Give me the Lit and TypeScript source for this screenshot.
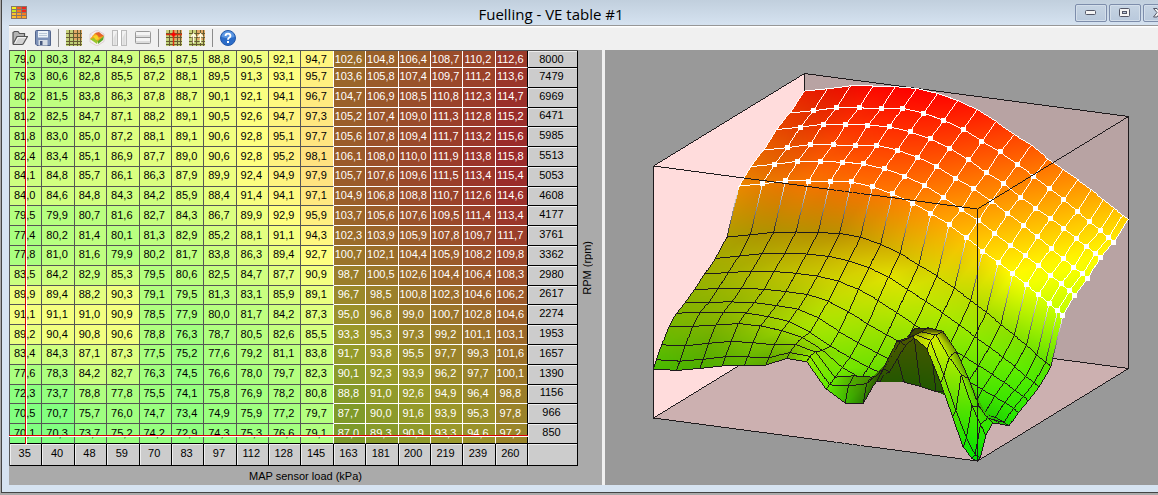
import { LitElement, html, css, svg } from "lit";
import { customElement } from "lit/decorators.js";
import { classMap } from "lit/directives/class-map.js";

const LOADS = [35, 40, 48, 59, 70, 83, 97, 112, 128, 145, 163, 181, 200, 219, 239, 260];
const SPEEDS = [
  8000, 7479, 6969, 6471, 5985, 5513, 5053, 4608, 4177, 3761,
  3362, 2980, 2617, 2274, 1953, 1657, 1390, 1156, 966, 850,
];
const VE: number[][] = [
  [79.0, 80.3, 82.4, 84.9, 86.5, 87.5, 88.8, 90.5, 92.1, 94.7, 102.6, 104.8, 106.4, 108.7, 110.2, 112.6],
  [79.3, 80.6, 82.8, 85.5, 87.2, 88.1, 89.5, 91.3, 93.1, 95.7, 103.6, 105.8, 107.4, 109.7, 111.2, 113.6],
  [80.2, 81.5, 83.8, 86.3, 87.8, 88.7, 90.1, 92.1, 94.1, 96.7, 104.7, 106.9, 108.5, 110.8, 112.3, 114.7],
  [81.2, 82.5, 84.7, 87.1, 88.2, 89.1, 90.5, 92.6, 94.7, 97.3, 105.2, 107.4, 109.0, 111.3, 112.8, 115.2],
  [81.8, 83.0, 85.0, 87.2, 88.1, 89.1, 90.6, 92.8, 95.1, 97.7, 105.6, 107.8, 109.4, 111.7, 113.2, 115.6],
  [82.4, 83.4, 85.1, 86.9, 87.7, 89.0, 90.6, 92.8, 95.2, 98.1, 106.1, 108.0, 110.0, 111.9, 113.8, 115.8],
  [84.1, 84.8, 85.7, 86.1, 86.3, 87.9, 89.9, 92.4, 94.9, 97.9, 105.7, 107.6, 109.6, 111.5, 113.4, 115.4],
  [84.0, 84.6, 84.8, 84.3, 84.2, 85.9, 88.4, 91.4, 94.1, 97.1, 104.9, 106.8, 108.8, 110.7, 112.6, 114.6],
  [79.5, 79.9, 80.7, 81.6, 82.7, 84.3, 86.7, 89.9, 92.9, 95.9, 103.7, 105.6, 107.6, 109.5, 111.4, 113.4],
  [77.4, 80.2, 81.4, 80.1, 81.3, 82.9, 85.2, 88.1, 91.1, 94.3, 102.3, 103.9, 105.9, 107.8, 109.7, 111.7],
  [77.8, 81.0, 81.6, 79.9, 80.2, 81.7, 83.8, 86.3, 89.4, 92.7, 100.7, 102.1, 104.4, 105.9, 108.2, 109.8],
  [83.5, 84.2, 82.9, 85.3, 79.5, 80.6, 82.5, 84.7, 87.7, 90.9, 98.7, 100.5, 102.6, 104.4, 106.4, 108.3],
  [89.9, 89.4, 88.2, 90.3, 79.1, 79.5, 81.3, 83.1, 85.9, 89.1, 96.7, 98.5, 100.8, 102.3, 104.6, 106.2],
  [91.1, 91.1, 91.0, 90.9, 78.5, 77.9, 80.0, 81.7, 84.2, 87.3, 95.0, 96.8, 99.0, 100.7, 102.8, 104.6],
  [89.2, 90.4, 90.8, 90.6, 78.8, 76.3, 78.7, 80.5, 82.6, 85.5, 93.3, 95.3, 97.3, 99.2, 101.1, 103.1],
  [83.4, 84.3, 87.1, 87.3, 77.5, 75.2, 77.6, 79.2, 81.1, 83.8, 91.7, 93.8, 95.5, 97.7, 99.3, 101.6],
  [77.6, 78.3, 84.2, 82.7, 76.3, 74.5, 76.6, 78.0, 79.7, 82.3, 90.1, 92.3, 93.9, 96.2, 97.7, 100.1],
  [72.3, 73.7, 78.8, 77.8, 75.5, 74.1, 75.8, 76.9, 78.2, 80.8, 88.8, 91.0, 92.6, 94.9, 96.4, 98.8],
  [70.5, 70.7, 75.7, 76.0, 74.7, 73.4, 74.9, 75.9, 77.2, 79.7, 87.7, 90.0, 91.6, 93.9, 95.3, 97.8],
  [70.1, 70.3, 73.7, 75.2, 74.2, 72.9, 74.3, 75.3, 76.6, 79.1, 87.0, 89.3, 90.9, 93.3, 94.6, 97.2],
];
const FIRST_SELECTED = 10;
const LOW = 70.1;
const HIGH = 115.8;

type Rgb = [number, number, number];

const level = (v: number) => (v - LOW) / (HIGH - LOW);

/** Green through yellow to red for a level between 0 and 1. */
function ramp(h: number): Rgb {
  return [Math.min(1, 2 * h) * 255, Math.min(1, 2 - 2 * h) * 255, 0];
}

function cellColor(v: number, selected: boolean): string {
  const c = ramp(level(v)).map((x) => Math.round(selected ? 42 + x * 0.44 : 128 + x * 0.498));
  return `rgb(${c.join(",")})`;
}

/* ---------- 3D surface ---------- */

interface Vertex {
  x: number;
  y: number;
  d: number;
  c: Rgb;
}

const SCENE_W = 553;
const SCENE_H = 435;
const AMBIENT = 0.27;
const DIFFUSE = 0.68;
const BACK_SHADE = 0.34;
const SELECTED_GAIN = 1.36;

@customElement("ve-surface")
export class VeSurface extends LitElement {
  static styles = css`
    :host {
      display: block;
      position: relative;
      min-width: 0;
      min-height: 0;
      background: #999;
      overflow: hidden;
    }
    .view {
      position: absolute;
      inset: 0;
      width: 100%;
      height: 100%;
    }
  `;

  private observer?: ResizeObserver;

  firstUpdated() {
    this.observer = new ResizeObserver(() => this.draw());
    this.observer.observe(this);
    this.draw();
  }

  disconnectedCallback() {
    super.disconnectedCallback();
    this.observer?.disconnect();
  }

  private draw() {
    const canvas = this.renderRoot.querySelector("canvas");
    const w = this.clientWidth;
    const h = this.clientHeight;
    if (!canvas || !w || !h) return;
    canvas.width = w;
    canvas.height = h;
    const ctx = canvas.getContext("2d")!;
    const image = ctx.createImageData(w, h);
    const px = image.data;
    const depth = new Float32Array(w * h).fill(-1e9);

    const k = Math.min(w / SCENE_W, h / SCENE_H);
    const ox = (w - SCENE_W * k) / 2;
    const oy = (h - SCENE_H * k) / 2;

    const project = (u: number, v: number, z: number, c: Rgb): Vertex => ({
      x: ox + k * (48 + 324 * u + 151 * v),
      y: oy + k * (368 + 43 * u - 92.5 * v - 252 * z),
      d: 144.7 * u - 311 * v + 75 * z,
      c,
    });

    const plot = (x: number, y: number, d: number, r: number, g: number, b: number) => {
      if (x < 0 || y < 0 || x >= w || y >= h) return;
      const i = y * w + x;
      if (d < depth[i]) return;
      depth[i] = d;
      px[i * 4] = r;
      px[i * 4 + 1] = g;
      px[i * 4 + 2] = b;
      px[i * 4 + 3] = 255;
    };

    const signedArea = (a: Vertex, b: Vertex, c: Vertex) =>
      (b.x - a.x) * (c.y - a.y) - (c.x - a.x) * (b.y - a.y);

    const triangle = (a: Vertex, b: Vertex, c: Vertex) => {
      const area = signedArea(a, b, c);
      if (Math.abs(area) < 1e-6) return;
      const x0 = Math.floor(Math.min(a.x, b.x, c.x));
      const x1 = Math.ceil(Math.max(a.x, b.x, c.x));
      const y0 = Math.floor(Math.min(a.y, b.y, c.y));
      const y1 = Math.ceil(Math.max(a.y, b.y, c.y));
      for (let y = y0; y <= y1; y++) {
        for (let x = x0; x <= x1; x++) {
          const p = x + 0.5;
          const q = y + 0.5;
          const wb = ((p - a.x) * (c.y - a.y) - (c.x - a.x) * (q - a.y)) / area;
          const wc = ((b.x - a.x) * (q - a.y) - (p - a.x) * (b.y - a.y)) / area;
          const wa = 1 - wb - wc;
          if (wa < -1e-4 || wb < -1e-4 || wc < -1e-4) continue;
          plot(
            x, y, wa * a.d + wb * b.d + wc * c.d,
            wa * a.c[0] + wb * b.c[0] + wc * c.c[0],
            wa * a.c[1] + wb * b.c[1] + wc * c.c[1],
            wa * a.c[2] + wb * b.c[2] + wc * c.c[2],
          );
        }
      }
    };

    const line = (a: Vertex, b: Vertex, bias: number) => {
      const n = Math.max(1, Math.ceil(Math.max(Math.abs(b.x - a.x), Math.abs(b.y - a.y))));
      for (let s = 0; s <= n; s++) {
        const t = s / n;
        const m = (p: number, q: number) => p + (q - p) * t;
        plot(
          Math.floor(m(a.x, b.x)), Math.floor(m(a.y, b.y)), m(a.d, b.d) + bias,
          m(a.c[0], b.c[0]), m(a.c[1], b.c[1]), m(a.c[2], b.c[2]),
        );
      }
    };

    const face = (points: number[][], c: Rgb) => {
      const p = points.map(([u, v, z]) => project(u, v, z, c));
      p.forEach((q) => (q.d -= 500));
      triangle(p[0], p[1], p[2]);
      triangle(p[0], p[2], p[3]);
    };
    face([[0, 0, 0], [0, 1, 0], [0, 1, 1], [0, 0, 1]], [255, 220, 220]);
    face([[0, 1, 0], [1, 1, 0], [1, 1, 1], [0, 1, 1]], [184, 163, 163]);
    face([[0, 0, 0], [1, 0, 0], [1, 1, 0], [0, 1, 0]], [204, 176, 176]);

    const ink: Rgb = [30, 26, 28];
    const edge = (a: number[], b: number[], bias: number) =>
      line(project(a[0], a[1], a[2], ink), project(b[0], b[1], b[2], ink), bias);
    edge([0, 0, 0], [0, 1, 0], -400);
    edge([0, 1, 0], [1, 1, 0], -400);
    edge([0, 1, 0], [0, 1, 1], -400);

    const u = SPEEDS.map((s) => (SPEEDS[0] - s) / (SPEEDS[0] - SPEEDS[SPEEDS.length - 1]));
    const v = LOADS.map((l) => (l - LOADS[0]) / (LOADS[LOADS.length - 1] - LOADS[0]));
    const rows = u.length;
    const cols = v.length;
    const clampI = (i: number) => Math.max(0, Math.min(rows - 1, i));
    const clampJ = (j: number) => Math.max(0, Math.min(cols - 1, j));
    const rise = 263 / 357;

    const mesh: Vertex[][] = [];
    const underside: Vertex[][] = [];
    for (let i = 0; i < rows; i++) {
      mesh.push([]);
      underside.push([]);
      for (let j = 0; j < cols; j++) {
        const z = level(VE[i][j]);
        const [i0, i1, j0, j1] = [clampI(i - 1), clampI(i + 1), clampJ(j - 1), clampJ(j + 1)];
        const su = (rise * (level(VE[i1][j]) - level(VE[i0][j]))) / (u[i1] - u[i0]);
        const sv = (rise * (level(VE[i][j1]) - level(VE[i][j0]))) / (v[j1] - v[j0]);
        const lit = (0.65 - 0.65 * su + 0.35 * sv) / Math.hypot(su, sv, 1);
        const gain = j >= FIRST_SELECTED ? SELECTED_GAIN : 1;
        const shade = Math.min(1, gain * (AMBIENT + DIFFUSE * Math.max(0, lit)));
        const base = ramp(z);
        mesh[i].push(project(u[i], v[j], z, base.map((x) => x * shade) as Rgb));
        underside[i].push(project(u[i], v[j], z, base.map((x) => x * BACK_SHADE) as Rgb));
      }
    }
    const facet = (corners: [number, number][]) => {
      const front = corners.map(([i, j]) => mesh[i][j]);
      const facing = signedArea(front[0], front[1], front[2]) < 0;
      const p = facing ? front : corners.map(([i, j]) => underside[i][j]);
      triangle(p[0], p[1], p[2]);
    };
    for (let i = 0; i + 1 < rows; i++) {
      for (let j = 0; j + 1 < cols; j++) {
        facet([[i, j], [i + 1, j], [i + 1, j + 1]]);
        facet([[i, j], [i + 1, j + 1], [i, j + 1]]);
      }
    }
    const white: Rgb = [255, 255, 255];
    const wire = mesh.map((row) =>
      row.map((p, j) => ({ ...p, c: j >= FIRST_SELECTED ? white : ink })),
    );
    for (let i = 0; i < rows; i++) {
      for (let j = 0; j < cols; j++) {
        if (i + 1 < rows) line(wire[i][j], wire[i + 1][j], 3);
        if (j + 1 < cols) line(wire[i][j], wire[i][j + 1], 3);
      }
    }
    for (let i = 1; i < rows; i++) {
      for (let j = FIRST_SELECTED; j + 1 < cols; j++) {
        const p = mesh[i][j];
        for (let dy = -2; dy <= 2; dy++) {
          for (let dx = -2; dx <= 2; dx++) {
            plot(Math.floor(p.x) + dx, Math.floor(p.y) + dy, p.d + 8, 255, 255, 255);
          }
        }
      }
    }

    edge([0, 0, 1], [0, 1, 1], -400);
    edge([0, 1, 1], [1, 1, 1], -400);
    edge([1, 1, 0], [1, 1, 1], -400);
    edge([0, 0, 0], [0, 0, 1], 900);
    edge([0, 0, 0], [1, 0, 0], 900);
    edge([1, 0, 0], [1, 1, 0], 900);
    edge([0, 0, 1], [1, 0, 1], 900);
    edge([1, 0, 1], [1, 1, 1], 900);
    edge([1, 0, 0], [1, 0, 1], 900);
    ctx.putImageData(image, 0, 0);
  }

  render() {
    return html`<canvas class="view" role="img" aria-label="VE table surface"></canvas>`;
  }
}

/* ---------- table ---------- */

@customElement("ve-table")
export class VeTable extends LitElement {
  static styles = css`
    :host {
      display: grid;
      grid-template-columns: minmax(0, 1fr) 24px;
      grid-template-rows: minmax(0, 1fr) 19px;
      min-width: 0;
      min-height: 0;
      background: #aaa;
      font: 11px/14px "Liberation Sans", Arial, sans-serif;
      color: #000;
    }
    .frame {
      grid-area: 1 / 1;
      position: relative;
      min-height: 0;
    }
    table {
      width: 100%;
      height: 100%;
      table-layout: fixed;
      border-collapse: separate;
      border-spacing: 0;
      border-top: 1px solid #555;
      border-left: 1px solid #555;
      box-sizing: border-box;
    }
    .speed {
      width: 50px;
    }
    td,
    th {
      padding: 0 2px 2px 0;
      text-align: center;
      font-weight: normal;
      white-space: nowrap;
      border-right: 1px solid #555;
      border-bottom: 1px solid #555;
      overflow: hidden;
    }
    tbody tr:first-child {
      height: 17px;
    }
    tfoot tr {
      height: 22px;
    }
    .before {
      border-right-color: #fff;
    }
    .selected {
      color: #fff;
      border-color: #fff;
    }
    .last {
      border-right-color: #000;
    }
    tbody tr:last-child td {
      border-bottom-color: #000;
    }
    th {
      padding-bottom: 3px;
      background: #ccc;
      border-color: #000;
      box-shadow: inset 1px 1px #eee;
    }
    tbody tr:first-child > * {
      padding-bottom: 0;
    }
    .hair-x,
    .hair-y {
      position: absolute;
      pointer-events: none;
    }
    .hair-x {
      left: 0;
      right: 50px;
      bottom: 29px;
      height: 1px;
      background: #d00;
      border-bottom: 1px solid #fff;
    }
    .hair-y {
      top: 0;
      bottom: 22px;
      left: 16px;
      width: 1px;
      background: #d00;
      border-right: 1px solid #fff;
    }
    .speed-label {
      grid-area: 1 / 2 / 3;
      align-self: center;
      justify-self: start;
      padding-right: 2px;
      writing-mode: vertical-rl;
      transform: rotate(180deg);
    }
    .load-label {
      grid-area: 2 / 1 / 3 / 3;
      align-self: center;
      text-align: center;
    }
  `;

  render() {
    return html`
      <div class="frame">
        <table aria-label="VE table">
          <colgroup>
            ${LOADS.map(() => html`<col />`)}
            <col class="speed" />
          </colgroup>
          <tbody>
            ${SPEEDS.map(
              (speed, i) => html`<tr>
                ${VE[i].map((value, j) => {
                  const selected = j >= FIRST_SELECTED;
                  return html`<td
                    class=${classMap({
                      selected,
                      before: j === FIRST_SELECTED - 1,
                      last: j === LOADS.length - 1,
                    })}
                    style="background:${cellColor(value, selected)}"
                  >${value.toFixed(1).replace(".", ",")}</td>`;
                })}
                <th scope="row">${speed}</th>
              </tr>`,
            )}
          </tbody>
          <tfoot>
            <tr>
              ${LOADS.map((load) => html`<th scope="col">${load}</th>`)}
              <th></th>
            </tr>
          </tfoot>
        </table>
        <div class="hair-y"></div>
        <div class="hair-x"></div>
      </div>
      <div class="speed-label">RPM (rpm)</div>
      <div class="load-label">MAP sensor load (kPa)</div>
    `;
  }
}

/* ---------- icons ---------- */

const lattice = svg`
  <rect width="16" height="16" fill="#c5cf78"/>
  <rect x="8" width="8" height="10" fill="#dfa765"/>
  <rect y="10" width="9" height="6" fill="#bcd077"/>
  <path d="M0 3.5H16M0 7.5H16M0 11.5H16M0 14.5H16M3.5 0V16M7.5 0V16M11.5 0V16M14.5 0V16" stroke="#665c31" stroke-width="1" fill="none"/>`;

const icons = {
  open: svg`
    <path d="M1 13.500V2.500L2.500 1.500H6L7.500 3.500H12.500V6" fill="#b4b4b4" stroke="#555" stroke-width="1.200"/>
    <path d="M1 14L5 6.500H15.500L11.500 13.500Q11 14.500 10 14.500H1.500Z" fill="#d2d2d2" stroke="#555" stroke-width="1.200"/>
    <path d="M3 13L6 7.700H14" stroke="#fafafa" fill="none"/>`,
  save: svg`
    <path d="M.5 1.500Q.5.500 1.500.500H14.500Q15.500.500 15.500 1.500V15.500H2L.5 14Z" fill="#7e92b8" stroke="#53658c"/>
    <rect x="3" y="1" width="10" height="6.500" fill="#eef3f8"/>
    <path d="M4 3.500H12M4 5.500H12" stroke="#b9c6d6"/>
    <rect x="3.500" y="10" width="9" height="5.500" fill="#d7dde6"/>
    <rect x="5" y="11" width="2.500" height="4" fill="#46577d"/>`,
  grid: lattice,
  surface: svg`
    <path d="M8 0L15 4V11.500L8 16L1 12V4Z" fill="#f6f0f2" stroke="#d9c6cc" stroke-width=".8"/>
    <path d="M8 0V8M1 4L8 8L15 4" stroke="#ddd0d4" fill="none" stroke-width=".8"/>
    <path d="M1 9L6 3L15 6L9 12Z" fill="#f5a21d"/>
    <path d="M6 3L10 2L15 6L10 7Z" fill="#e4632a"/>
    <path d="M1 9L5 8L9 11L8 14Z" fill="#9ac72c"/>
    <path d="M9 11L15 6L14 10L9 14Z" fill="#5ba626"/>
    <path d="M4 6L8 5L10 9L7 10Z" fill="#f7d428"/>`,
  columns: svg`
    <rect x=".5" y=".5" width="14" height="15" fill="#f2f2f2" stroke="#bbb"/>
    <path d="M5.500 1V15M9.500 1V15" stroke="#b5b5b5"/>
    <rect x="6" y="0" width="3" height="16" fill="#fff"/>
    <path d="M1.500 8L4.500 2V15H1.500Z" fill="#dedede"/>
    <path d="M10.500 8L13.500 2V15H10.500Z" fill="#dedede"/>`,
  rows: svg`
    <rect x=".5" y="1.500" width="15" height="12" rx="1" fill="#f4f4f4" stroke="#999"/>
    <rect x="1" y="5" width="14" height="2" fill="#dcdcdc"/>
    <path d="M1 7.500H15" stroke="#999"/>
    <rect x="1" y="11" width="14" height="2" fill="#dcdcdc"/>`,
  cross: svg`${lattice}
    <path d="M0 4.500H16M7.500 0V16" stroke="#d9300f" stroke-width="1.500"/>
    <path d="M5.500 4.500H9.500M7.500 2.500V6.500" stroke="#f00" stroke-width="2"/>`,
  arrows: svg`${lattice}
    <path d="M4.500 13V5M11.500 13V5M2 7L4.500 4L7 7M9 7L11.500 4L14 7" stroke="#fffbe0" stroke-width="1.500" fill="none"/>`,
  help: svg`
    <circle cx="8" cy="8" r="7.500" fill="#2b6cc8" stroke="#2459a8"/>
    <path d="M1.500 7A6.500 6 0 0 1 14.500 7Q8 9 1.500 7Z" fill="#5c97e2"/>
    <path d="M5.500 6Q5.500 3.600 8 3.600T10.500 6Q10.500 7.200 8.800 8Q8 8.500 8 9.800" stroke="#fff" stroke-width="1.800" fill="none"/>
    <rect x="7" y="11" width="2" height="2" fill="#fff"/>`,
};

const TOOLS: ({ name: string; icon: keyof typeof icons } | null)[] = [
  { name: "Open", icon: "open" },
  { name: "Save", icon: "save" },
  null,
  { name: "Show table", icon: "grid" },
  { name: "Show surface", icon: "surface" },
  { name: "Split vertically", icon: "columns" },
  { name: "Split horizontally", icon: "rows" },
  null,
  { name: "Follow cursor", icon: "cross" },
  { name: "Interpolate", icon: "arrows" },
  null,
  { name: "Help", icon: "help" },
];

@customElement("app-root")
export class AppRoot extends LitElement {
  static styles = css`
    :host {
      display: flex;
      flex-direction: column;
      box-sizing: border-box;
      height: 100vh;
      overflow: hidden;
      padding: 0 0 2px 1px;
      background: #aaa;
    }
    .window {
      flex: 1;
      min-height: 0;
      display: flex;
      flex-direction: column;
      padding: 0 0 7px 7px;
      border-left: 1px solid #444;
      border-bottom: 1px solid #444;
      background: linear-gradient(#c1cfdd, #d6e3f1 26px);
    }
    .title {
      display: flex;
      align-items: center;
      height: 25px;
      padding-left: 2px;
      overflow: hidden;
      border-bottom: 1px solid #979797;
    }
    .logo {
      width: 16px;
      height: 13px;
    }
    h1 {
      flex: 1;
      margin: 0;
      padding-top: 2px;
      text-align: center;
      font: 15px/20px "Open Sans", "Noto Sans", sans-serif;
      color: #000;
    }
    .controls {
      display: flex;
      gap: 2px;
      margin-right: -17px;
    }
    .control {
      display: grid;
      place-items: center;
      width: 32px;
      height: 18px;
      padding: 0;
      border: 1px solid #7d8dab;
      border-radius: 2px;
      background: linear-gradient(#c6d4e3, #b9c9dc);
      box-shadow: inset 0 0 0 1px #d3deea;
    }
    .toolbar {
      display: flex;
      align-items: center;
      gap: 7px;
      height: 24px;
      padding-left: 3px;
      background: linear-gradient(#fff 1px, #f0f0f0 2px);
    }
    .tool {
      display: block;
      width: 16px;
      height: 16px;
      padding: 0;
      border: 0;
      background: none;
    }
    .tool svg,
    .logo,
    .control svg {
      display: block;
    }
    .separator {
      width: 1px;
      height: 18px;
      background: #8c8c8c;
    }
    .panes {
      flex: 1;
      min-height: 0;
      display: grid;
      grid-template-columns: 593fr 3px 553fr;
      background: #f0f0f0;
    }
    ve-surface {
      grid-column: 3;
    }
  `;

  render() {
    return html`
      <main class="window">
        <header class="title">
          <svg class="logo" viewBox="0 0 16 13">
            <rect width="16" height="13" fill="#8a7468" />
            <path d="M1 1h4v2H1z" fill="#f4f41c" />
            <path d="M6 1h4v2H6z" fill="#f65a1e" />
            <path d="M11 1h4v2h-4zM11 4h4v2h-4z" fill="#f2241c" />
            <path d="M1 4h4v2H1z" fill="#c8e820" />
            <path d="M6 4h4v2H6zM11 7h4v2h-4z" fill="#f67a1e" />
            <path d="M1 7h4v2H1zM1 10h4v2H1z" fill="#fbc02a" />
            <path d="M6 7h4v2H6zM6 10h4v2H6zM11 10h4v2h-4z" fill="#faa424" />
          </svg>
          <h1>Fuelling - VE table #1</h1>
          <div class="controls">
            <button class="control" aria-label="Minimize">
              <svg width="12" height="6" viewBox="0 0 12 6">
                <rect x=".5" y=".5" width="10" height="4" rx="1" fill="#f4f4f4" stroke="#535666" />
              </svg>
            </button>
            <button class="control" aria-label="Maximize">
              <svg width="12" height="10" viewBox="0 0 12 10">
                <rect x=".5" y=".5" width="10" height="8" rx="1" fill="#f4f4f4" stroke="#535666" />
                <rect x="3.500" y="3.500" width="4" height="2" fill="#b9c9dc" stroke="#535666" />
              </svg>
            </button>
            <button class="control" aria-label="Close">
              <svg width="12" height="10" viewBox="0 0 12 10">
                <path
                  d="M.5.500H4L6 3L8 .500H11.500L8 4.500L11.500 9H8L6 6.500L4 9H.500L4 4.500Z"
                  fill="#f4f4f4"
                  stroke="#535666"
                />
              </svg>
            </button>
          </div>
        </header>
        <nav class="toolbar" aria-label="Tools">
          ${TOOLS.map((tool) =>
            tool
              ? html`<button class="tool" aria-label=${tool.name}>
                  <svg width="16" height="16" viewBox="0 0 16 16">${icons[tool.icon]}</svg>
                </button>`
              : html`<span class="separator"></span>`,
          )}
        </nav>
        <section class="panes">
          <ve-table></ve-table>
          <ve-surface></ve-surface>
        </section>
      </main>
    `;
  }
}
